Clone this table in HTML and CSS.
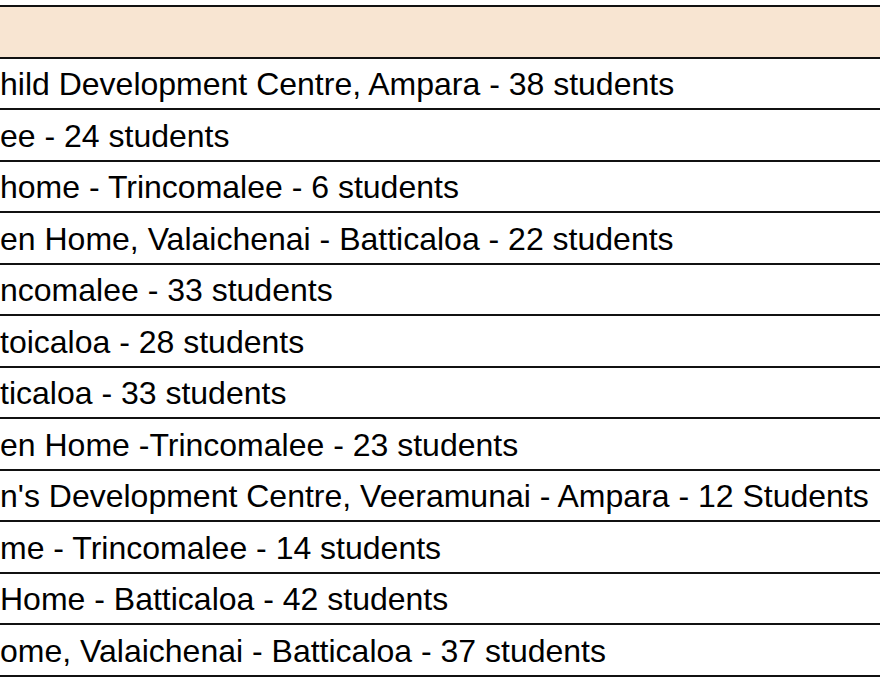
FILE: index.html
```html
<!DOCTYPE html>
<html>
<head>
<meta charset="utf-8">
<link rel="stylesheet" href="styles.css">
</head>
<body>
<table class="list">
  <tr class="head"><td></td></tr>
  <tr><td>hild Development Centre, Ampara - 38 students</td></tr>
  <tr><td>ee - 24 students</td></tr>
  <tr><td>home - Trincomalee - 6 students</td></tr>
  <tr><td>en Home, Valaichenai - Batticaloa - 22 students</td></tr>
  <tr><td>ncomalee - 33 students</td></tr>
  <tr><td>toicaloa - 28 students</td></tr>
  <tr><td>ticaloa - 33 students</td></tr>
  <tr><td>en Home -Trincomalee - 23 students</td></tr>
  <tr><td>n's Development Centre, Veeramunai - Ampara - 12 Students</td></tr>
  <tr><td>me - Trincomalee - 14 students</td></tr>
  <tr><td>Home - Batticaloa - 42 students</td></tr>
  <tr><td>ome, Valaichenai - Batticaloa - 37 students</td></tr>
</table>
</body>
</html>
```
FILE: styles.css
```css
html, body {
  margin: 0;
  padding: 0;
  background: #ffffff;
  overflow: hidden;
}
body {
  width: 880px;
  height: 680px;
}
.list {
  border-collapse: collapse;
  width: 920px;
  margin-top: 5px;
  font-family: "Liberation Sans", Arial, sans-serif;
  font-size: 32px;
  color: #000;
}
.list td {
  border-top: 2px solid #111;
  border-bottom: 2px solid #111;
  height: 47.5px;
  padding: 2px 0 0 0;
  white-space: nowrap;
  vertical-align: middle;
  line-height: 1;
}
.list .head td {
  background: #f8e5d2;
}
```
